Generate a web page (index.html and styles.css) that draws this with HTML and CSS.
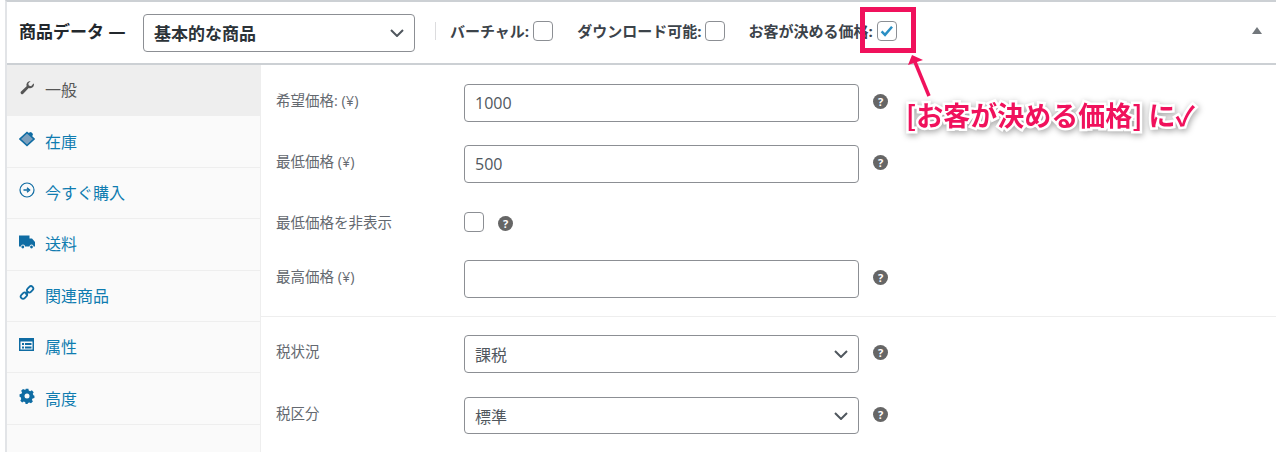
FILE: index.html
```html
<!DOCTYPE html>
<html lang="ja">
<head>
    <meta charset="UTF-8">
    <title>商品データ</title>
    <link rel="stylesheet" href="styles.css">
</head>
<body>
    <div class="panel">
        <div class="panel-header">
            <span class="panel-title">商品データ —</span>
            <div class="select select-type"><span>基本的な商品</span><svg class="chevron" viewBox="0 0 14 8"><path d="M1 1l6 6 6-6" fill="none" stroke="#50575e" stroke-width="2"/></svg></div>
            <span class="divider"></span>
            <label class="opt opt-virtual">バーチャル:<span class="check"></span></label>
            <label class="opt opt-download">ダウンロード可能:<span class="check"></span></label>
            <label class="opt opt-price">お客が決める価格:<span class="check checked"><svg viewBox="0 0 20 20"><path d="M4 10.5l3.800 3.800 7.800-9" fill="none" stroke="#2a8fc4" stroke-width="2.800"/></svg></span></label>
            <svg class="toggle" viewBox="0 0 10 7"><path d="M5 0l5 7H0z" fill="#72777c"/></svg>
        </div>

        <div class="panel-body">
            <ul class="tabs">
                <li class="tab active">
                    <svg viewBox="0 0 16 16"><path d="M15 4.200a4 4 0 0 1-5.300 3.900L4 14a1.600 1.600 0 0 1-2.200-2.200l5.800-5.600A4 4 0 0 1 11.600 1L9.300 3.400l.5 2.200 2.300.6L14.500 3.600c.3.2.5.4.5.6z" fill="#555"/></svg>
                    一般
                </li>
                <li class="tab">
                    <svg viewBox="0 0 16 16"><path d="M8 1.500L15 8l-7 6.500L1 8z" fill="#7b9fbd" stroke="#0f6ca3" stroke-width="1.600"/><path d="M9 2l3-1 2 2-1 3" fill="#0f6ca3"/></svg>
                    在庫
                </li>
                <li class="tab">
                    <svg viewBox="0 0 16 16"><circle cx="8" cy="8" r="7" fill="none" stroke="#0f6ca3" stroke-width="1.200"/><path d="M4.500 8h5M8 5.700L10.600 8 8 10.300" fill="none" stroke="#0f6ca3" stroke-width="1.400"/></svg>
                    今すぐ購入
                </li>
                <li class="tab">
                    <svg viewBox="0 0 16 16"><path d="M0 1.500h10.500v3h2.500l3 3.500v4.500h-1.500a2 2 0 0 0-4 0h-4.500a2 2 0 0 0-4 0H0z" fill="#0f6ca3"/><circle cx="3.800" cy="13" r="1.400" fill="#0f6ca3"/><circle cx="12.500" cy="13" r="1.400" fill="#0f6ca3"/></svg>
                    送料
                </li>
                <li class="tab">
                    <svg viewBox="0 0 16 16"><g fill="none" stroke="#0f6ca3" stroke-width="1.800"><rect x="7.600" y="2" width="7" height="4.600" rx="2.300" transform="rotate(-45 11.100 4.300)"/><rect x="1.400" y="8.400" width="7" height="4.600" rx="2.300" transform="rotate(-45 4.900 10.700)"/><path d="M6.500 9.500l3-3"/></g></svg>
                    関連商品
                </li>
                <li class="tab">
                    <svg viewBox="0 0 16 16"><path d="M0 1h15v13H0z" fill="#0f6ca3"/><path d="M1.500 4.500h12v8h-12z" fill="#fafafa"/><path d="M3 6h2v2H3zM6 6h6.500v2H6zM3 9.500h2v2H3zM6 9.500h6.500v2H6z" fill="#0f6ca3"/></svg>
                    属性
                </li>
                <li class="tab">
                    <svg viewBox="0 0 16 16"><path d="M6.500 1h3l.4 2 1.500.7 1.800-1 2 2-1 1.800.7 1.500 1.100.4v2.600l-2 .4-.7 1.500 1 1.800-2 2-1.800-1-1.500.7-.4 1.100H6.500l-.4-2-1.500-.7-1.800 1-2-2 1-1.800L1.100 9.900 0 9.500V6.900l2-.4.700-1.500-1-1.800 2-2 1.800 1 1.500-.7z" fill="#0f6ca3" transform="scale(.93) translate(.6 -.2)"/><circle cx="8" cy="7.900" r="2.500" fill="#fafafa"/></svg>
                    高度
                </li>
            </ul>

            <div class="form">
                <div class="form-section">
                    <div class="row">
                        <label class="row-label">希望価格: (¥)</label>
                        <div class="input">1000</div>
                        <span class="help">?</span>
                    </div>
                    <div class="row">
                        <label class="row-label">最低価格 (¥)</label>
                        <div class="input">500</div>
                        <span class="help">?</span>
                    </div>
                    <div class="row row-check">
                        <label class="row-label">最低価格を非表示</label>
                        <span class="check"></span>
                        <span class="help help-near">?</span>
                    </div>
                    <div class="row">
                        <label class="row-label">最高価格 (¥)</label>
                        <div class="input"></div>
                        <span class="help">?</span>
                    </div>
                </div>
                <div class="form-section">
                    <div class="row">
                        <label class="row-label">税状況</label>
                        <div class="select select-field"><span>課税</span><svg class="chevron" viewBox="0 0 14 8"><path d="M1 1l6 6 6-6" fill="none" stroke="#50575e" stroke-width="2"/></svg></div>
                        <span class="help">?</span>
                    </div>
                    <div class="row row-last">
                        <label class="row-label">税区分</label>
                        <div class="select select-field"><span>標準</span><svg class="chevron" viewBox="0 0 14 8"><path d="M1 1l6 6 6-6" fill="none" stroke="#50575e" stroke-width="2"/></svg></div>
                        <span class="help">?</span>
                    </div>
                </div>
            </div>
        </div>

        <!-- annotation drawn over the screenshot -->
        <div class="note-box"></div>
        <svg class="note-arrow" viewBox="0 0 30 46"><path d="M7 3l11 5-15 5z" fill="#f0115c"/><path d="M10 10l14 34" fill="none" stroke="#f0115c" stroke-width="3.500"/></svg>
        <div class="note-text">[お客が決める価格] に✓</div>
    </div>
</body>
</html>
```

FILE: styles.css
```css
* {
    box-sizing: border-box;
}
html, body {
    height: 100%;
}
body {
    margin: 0;
    background: #fff;
    font-family: "Open Sans", "Noto Sans CJK JP", sans-serif;
    color: #3c434a;
    overflow: hidden;
}
.panel {
    position: relative;
    height: 452px;
    margin-left: 5px;
    border-top: 2px solid #ccd0d4;
    border-left: 2px solid #e2e4e7;
}
.panel-header {
    position: relative;
    display: flex;
    align-items: center;
    height: 63px;
    padding-left: 12px;
    border-bottom: 2px solid #ccd0d4;
}
.panel-title {
    width: 124px;
    margin-bottom: 5px;
    font-size: 17px;
    font-weight: 700;
    color: #23282d;
    white-space: nowrap;
}
.select, .input {
    display: flex;
    align-items: center;
    border: 1.500px solid #8c8f94;
    border-radius: 4px;
    background: #fff;
    font-size: 16px;
    color: #50575e;
}
.select {
    justify-content: space-between;
    padding: 0 10px;
}
.select-type {
    width: 272px;
    height: 38px;
    font-size: 17px;
    font-weight: 700;
    color: #2c3338;
}
.chevron {
    width: 14px;
    height: 8px;
}
.divider {
    width: 1px;
    height: 18px;
    margin-left: 20px;
    margin-right: 14px;
    margin-bottom: 4px;
    background: #dcdcde;
}
.opt {
    display: flex;
    align-items: center;
    margin-bottom: 4px;
    font-size: 15px;
    font-weight: 700;
    color: #3c434a;
    white-space: nowrap;
}
.opt .check {
    margin-left: 4px;
}
.opt-download {
    margin-left: 24px;
}
.opt-price {
    margin-left: 23px;
}
.check {
    display: block;
    flex: none;
    width: 20px;
    height: 20px;
    border: 1.500px solid #8c8f94;
    border-radius: 4px;
    background: #fff;
}
.check svg {
    display: block;
    width: 100%;
    height: 100%;
}
.toggle {
    position: absolute;
    left: 1245px;
    top: 25px;
    width: 10px;
    height: 7px;
}
.panel-body {
    display: flex;
    height: 387px;
}
.tabs {
    flex: none;
    width: 254px;
    margin: 0;
    padding: 0;
    list-style: none;
    background: #fafafa;
    border-right: 1px solid #eee;
}
.tab {
    display: flex;
    align-items: center;
    gap: 10px;
    height: 51.400px;
    padding: 0 0 2px 12px;
    border-bottom: 1px solid #eee;
    font-size: 16px;
    color: #0f7cb0;
}
.tab svg {
    flex: none;
    width: 16px;
    height: 16px;
    margin-bottom: 3px;
}
.tab.active {
    background: #eee;
    color: #555;
}
.form {
    flex: 1;
}
.form-section {
    display: flex;
    flex-direction: column;
    gap: 23px;
    padding: 19px 0 18px 15px;
    border-bottom: 1px solid #eee;
}
.form-section:last-child {
    padding-top: 18px;
    border-bottom: none;
    gap: 24px;
}
.row {
    display: flex;
    align-items: center;
    height: 38px;
}
.row-check {
    height: 31px;
}
.row-label {
    flex: none;
    width: 188px;
    padding-bottom: 7px;
    font-size: 14.500px;
    color: #646970;
}
.row-check .row-label {
    padding-bottom: 0;
}
.input, .select-field {
    width: 395px;
    height: 38px;
    padding: 0 10px;
}
.row-last {
    height: 37px;
}
.row-last .select-field {
    height: 37px;
}
.help {
    display: flex;
    align-items: center;
    justify-content: center;
    width: 15px;
    height: 15px;
    margin-left: 14px;
    margin-bottom: 3px;
    border-radius: 50%;
    background: #666;
    color: #fff;
    font-size: 11px;
    font-weight: 700;
    line-height: 1;
}
.help-near {
    margin-top: 3px;
    margin-bottom: 0;
}
.note-box {
    position: absolute;
    left: 853px;
    top: 5px;
    width: 56px;
    height: 46px;
    border: 5px solid #f0115c;
}
.note-arrow {
    position: absolute;
    left: 898px;
    top: 50px;
    width: 30px;
    height: 46px;
}
.note-text {
    position: absolute;
    left: 899px;
    top: 95px;
    font-family: "Noto Sans CJK JP", sans-serif;
    font-size: 27px;
    font-weight: 700;
    line-height: 36px;
    color: #f0115c;
    white-space: nowrap;
    -webkit-text-stroke: 5px #fff;
    paint-order: stroke fill;
    filter: drop-shadow(1px 2px 3px rgba(0, 0, 0, .35));
}
```
